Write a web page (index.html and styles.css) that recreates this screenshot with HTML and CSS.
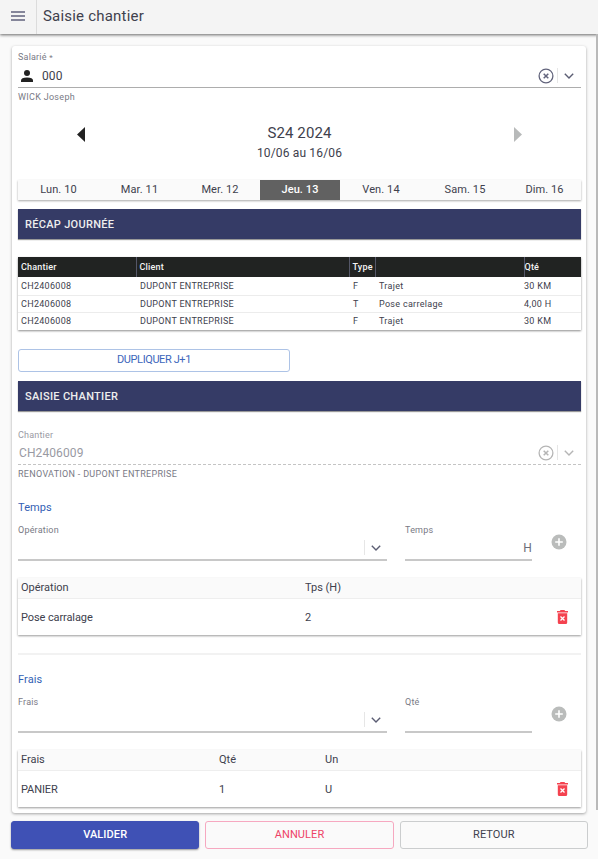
FILE: index.html
```html
<!DOCTYPE html>
<html lang="fr">
<head>
  <meta charset="UTF-8">
  <meta name="viewport" content="width=device-width, initial-scale=1.0">
  <title>Saisie chantier</title>
  <link rel="stylesheet" href="styles.css">
</head>
<body>
  <!-- Shared icons -->
  <svg class="sprite">
    <symbol id="clear" viewBox="0 0 16 16">
      <circle cx="8" cy="8" r="6.9" fill="none" stroke="currentColor" stroke-width="1.3"/>
      <path d="M5.7 5.7l4.6 4.6M10.3 5.7l-4.6 4.6" stroke="currentColor" stroke-width="1.5"/>
    </symbol>
    <symbol id="chevron" viewBox="0 0 10 6">
      <path d="M.8.8L5 5 9.200.8" fill="none" stroke="currentColor" stroke-width="1.4"/>
    </symbol>
    <symbol id="plus" viewBox="0 0 16 16">
      <circle cx="8" cy="8" r="7.500" fill="currentColor"/>
      <path d="M8 4.200v7.600M4.200 8h7.600" stroke="#fff" stroke-width="1.600"/>
    </symbol>
    <symbol id="trash" viewBox="0 0 11 14">
      <path fill="currentColor" d="M0 .9h2.800L3.600 0h3.800l.8.900H11v1.500H0zM.8 3.200h9.400v9.300q0 1.500-1.500 1.500H2.300Q.8 14 .8 12.500z"/>
      <path d="M3.500 6.500l4 4M7.500 6.500l-4 4" stroke="#fff" stroke-width="1.300"/>
    </symbol>
  </svg>

  <header class="topbar">
    <button class="menu" aria-label="Menu"><span></span><span></span><span></span></button>
    <h1>Saisie chantier</h1>
  </header>

  <main class="card">
    <div class="field employee">
      <label>Salarié <span class="required">*</span></label>
      <div class="control">
        <svg class="person" viewBox="0 0 12 12"><circle cx="6" cy="3" r="3"/><path d="M0 12V10.300Q0 7.400 6 7.400T12 10.300V12z"/></svg>
        <span class="value">000</span>
        <svg class="clear"><use href="#clear"/></svg>
        <span class="drop"><svg><use href="#chevron"/></svg></span>
      </div>
      <p class="hint">WICK Joseph</p>
    </div>

    <div class="week">
      <svg class="arrow" viewBox="0 0 8 15"><path d="M8 0v15L0 7.500z"/></svg>
      <div class="period">
        <strong>S24 2024</strong>
        <span>10/06 au 16/06</span>
      </div>
      <svg class="arrow next" viewBox="0 0 8 15"><path d="M0 0v15l8-7.500z"/></svg>
    </div>

    <nav class="days">
      <a>Lun. 10</a>
      <a>Mar. 11</a>
      <a>Mer. 12</a>
      <a class="active">Jeu. 13</a>
      <a>Ven. 14</a>
      <a>Sam. 15</a>
      <a>Dim. 16</a>
    </nav>

    <h2 class="banner">RÉCAP JOURNÉE</h2>

    <table class="recap">
      <thead>
        <tr><th class="c-site">Chantier</th><th class="c-client">Client</th><th class="c-type">Type</th><th class="c-label"></th><th class="c-qty">Qté</th></tr>
      </thead>
      <tbody>
        <tr><td>CH2406008</td><td>DUPONT ENTREPRISE</td><td>F</td><td>Trajet</td><td>30 KM</td></tr>
        <tr><td>CH2406008</td><td>DUPONT ENTREPRISE</td><td>T</td><td>Pose carrelage</td><td>4,00 H</td></tr>
        <tr><td>CH2406008</td><td>DUPONT ENTREPRISE</td><td>F</td><td>Trajet</td><td>30 KM</td></tr>
      </tbody>
    </table>

    <button class="duplicate">DUPLIQUER J+1</button>

    <h2 class="banner">SAISIE CHANTIER</h2>

    <div class="field disabled site">
      <label>Chantier</label>
      <div class="control">
        <span class="value">CH2406009</span>
        <svg class="clear"><use href="#clear"/></svg>
        <span class="drop"><svg><use href="#chevron"/></svg></span>
      </div>
      <p class="hint">RENOVATION - DUPONT ENTREPRISE</p>
    </div>

    <section class="entry">
      <h3>Temps</h3>
      <div class="form">
        <div class="field">
          <label>Opération</label>
          <div class="control"><span class="drop"><svg><use href="#chevron"/></svg></span></div>
        </div>
        <div class="field small">
          <label>Temps</label>
          <div class="control"><span class="unit">H</span></div>
        </div>
        <svg class="plus"><use href="#plus"/></svg>
      </div>
      <div class="list time">
        <div class="row head"><span>Opération</span><span>Tps (H)</span></div>
        <div class="row"><span>Pose carralage</span><span>2</span><svg class="trash"><use href="#trash"/></svg></div>
      </div>
    </section>

    <hr>

    <section class="entry">
      <h3>Frais</h3>
      <div class="form">
        <div class="field">
          <label>Frais</label>
          <div class="control"><span class="drop"><svg><use href="#chevron"/></svg></span></div>
        </div>
        <div class="field small">
          <label>Qté</label>
          <div class="control"></div>
        </div>
        <svg class="plus"><use href="#plus"/></svg>
      </div>
      <div class="list costs">
        <div class="row head"><span>Frais</span><span>Qté</span><span>Un</span></div>
        <div class="row"><span>PANIER</span><span>1</span><span>U</span><svg class="trash"><use href="#trash"/></svg></div>
      </div>
    </section>
  </main>

  <footer class="actions">
    <button class="primary">VALIDER</button>
    <button class="danger">ANNULER</button>
    <button>RETOUR</button>
  </footer>

  <div class="scrollbar"></div>
</body>
</html>
```
FILE: styles.css
```css
* { margin: 0; padding: 0; box-sizing: border-box; }
body {
  position: relative;
  height: 859px;
  overflow: hidden;
  font-family: Roboto, sans-serif;
  font-size: 11px;
  letter-spacing: 0.1px;
  background: #fafafa;
  color: #40414d;
}
button { font: inherit; color: inherit; letter-spacing: inherit; background: none; border: none; }
svg { display: block; flex: none; }
.sprite { position: absolute; width: 0; height: 0; }

.topbar {
  display: flex;
  align-items: center;
  height: 34px;
  background: #f4f4f4;
  box-shadow: 0 1px 3px rgba(0, 0, 0, 0.6);
}
.menu {
  display: flex;
  flex-direction: column;
  justify-content: center;
  gap: 2px;
  width: 37px;
  height: 34px;
  padding: 0 11px 2px 11px;
  border-right: 1px solid #dcdcdc;
}
.menu span { height: 2px; background: #85869a; }
.topbar h1 {
  padding: 0 0 3px 6px;
  font-size: 15px;
  font-weight: 400;
  letter-spacing: 0.2px;
}

.card {
  display: flex;
  flex-direction: column;
  width: 574px;
  height: 767px;
  margin: 12px 0 0 12px;
  padding: 0 5px 0 6px;
  background: #fff;
  border-radius: 3px;
  box-shadow: 0 1px 3px rgba(0, 0, 0, 0.35);
}

/* Fields */
.field label {
  display: block;
  height: 18px;
  line-height: 12px;
  font-size: 9px;
  letter-spacing: 0.2px;
  color: #797a85;
}
.control {
  display: flex;
  align-items: center;
  height: 24px;
  border-bottom: 1px solid #adadad;
}
.value { flex: 1; font-size: 12px; }
.person { width: 12px; height: 12px; margin: 0 9px 0 3px; fill: #222; }
.clear { width: 16px; height: 16px; color: #62647c; }
.drop {
  display: flex;
  align-items: center;
  justify-content: center;
  width: 24px;
  height: 15px;
  margin-left: 3px;
  padding-right: 1px;
  border-left: 1px solid #e6e6e6;
  color: #5b5d73;
}
.drop svg { width: 10px; height: 6px; }
.hint { line-height: 12px; font-size: 9px; color: #797a85; letter-spacing: 0.2px; }
.employee { height: 77px; padding-top: 5px; }
.employee label { height: 13px; }
.employee .hint { padding-top: 3px; letter-spacing: 0.3px; }
.required { font-size: 8px; }

.disabled label, .disabled .value { color: #999aa3; }
.disabled .clear, .disabled .drop { color: #b5b5b5; }
.disabled .control { border-bottom: 1px dashed #c4c4c4; }
.site { height: 90px; padding-top: 18px; }
.site label { height: 12px; }
.site .value { padding-left: 1px; letter-spacing: 0.1px; }
.site .hint { padding-top: 3px; letter-spacing: 0.3px; }

/* Week picker */
.week {
  display: flex;
  justify-content: space-between;
  height: 57px;
  padding: 4px 59px 0;
}
.arrow { width: 8px; height: 15px; fill: #222; }
.arrow.next { fill: #b8baba; }
.period { text-align: center; line-height: 20px; font-size: 12px; letter-spacing: 0.15px; margin-top: -4px; }
.period strong { display: block; font-size: 15px; font-weight: 400; letter-spacing: 0.1px; }

.days {
  display: grid;
  grid-template-columns: 81px 81px 80px 80px 82px 86px 73px;
  height: 20px;
  background: #fafafa;
  box-shadow: 0 1px 2px rgba(0, 0, 0, 0.35);
  text-align: center;
  line-height: 19px;
}
.days .active { background: #616161; color: #fff; font-weight: 500; }

.banner {
  flex: none;
  height: 30px;
  margin-top: 9px;
  padding-left: 7px;
  line-height: 31px;
  font-size: 11px;
  font-weight: 500;
  letter-spacing: 0.3px;
  background: #353b66;
  color: #eee;
  box-shadow: 0 1px 1px rgba(0, 0, 0, 0.4);
}

/* Day summary */
.recap {
  height: 73px;
  margin-top: 18px;
  table-layout: fixed;
  border-collapse: collapse;
  box-shadow: 0 1px 2px rgba(0, 0, 0, 0.45);
  font-size: 9px;
  letter-spacing: 0.3px;
}
.recap tr { height: 18px; }
.recap tbody tr:nth-child(2) { height: 17px; }
.recap thead tr { height: 20px; }
.recap th {
  padding-left: 3px;
  text-align: left;
  font-weight: 500;
  letter-spacing: 0.2px;
  background: #212322;
  color: #f4f4f4;
  border-right: 1px solid #555768;
}
.recap th:last-child { padding-left: 0; border-right: none; }
.recap td { padding-left: 4px; border-bottom: 1px solid #ececec; }
.recap td:first-child { padding-left: 3px; }
.recap tbody tr:last-child td { border-bottom: none; }
.recap td:last-child { padding-left: 0; }
.c-site { width: 118px; }
.c-client { width: 213px; }
.c-type { width: 26px; }
.c-label { width: 149px; }

.duplicate {
  flex: none;
  width: 272px;
  height: 23px;
  margin-top: 19px;
  padding-bottom: 2px;
  border: 1px solid #adc3e6;
  border-radius: 3px;
  letter-spacing: -0.4px;
  color: #3c66bb;
}

/* Time and costs */
.entry h3 { height: 23px; line-height: 14px; font-size: 11px; font-weight: 400; color: #345fb4; }
.form { display: flex; gap: 18px; }
.form .field { width: 369px; }
.form .small { width: 127px; }
.form label { height: 12px; }
.form .control { height: 25px; justify-content: flex-end; border-bottom: 2px solid #c8c8c8; }
.form .drop { width: 23px; padding-right: 0; }
.unit { font-size: 12px; color: #6c6d7a; }
.plus { width: 16px; height: 16px; margin: 10px 0 0 1px; color: #babcbb; }
.list { height: 57px; margin-top: 17px; box-shadow: 0 1px 2px rgba(0, 0, 0, 0.4); letter-spacing: -0.1px; }
.row { display: grid; align-items: center; height: 36px; padding-left: 3px; }
.row.head { height: 21px; padding-bottom: 1px; background: #fafafa; border-bottom: 1px solid #eee; letter-spacing: 0; }
.time .row { grid-template-columns: 284px 252px 11px; }
.costs .row { grid-template-columns: 198px 106px 232px 11px; }
.trash { width: 11px; height: 14px; color: #f4424f; }
hr { flex: none; height: 2px; margin: 18px 0; border: none; background: #f2f2f2; }

.actions { display: flex; gap: 6px; padding: 8px 10px 0 11px; }
.actions button {
  flex: 1;
  height: 28px;
  padding-bottom: 2px;
  border: 1px solid #cbcdce;
  border-radius: 3px;
}
.actions .primary { border-color: #3f51b5; background: #3f51b5; color: #fff; font-weight: 500; box-shadow: 0 1px 2px rgba(0, 0, 0, 0.4); }
.actions .danger { border-color: #f6a8c0; color: #ee4266; }

/* Lies over the page edge */
.scrollbar { position: absolute; top: 34px; right: 0; width: 2px; height: 776px; background: #b9b9b9; }
```
